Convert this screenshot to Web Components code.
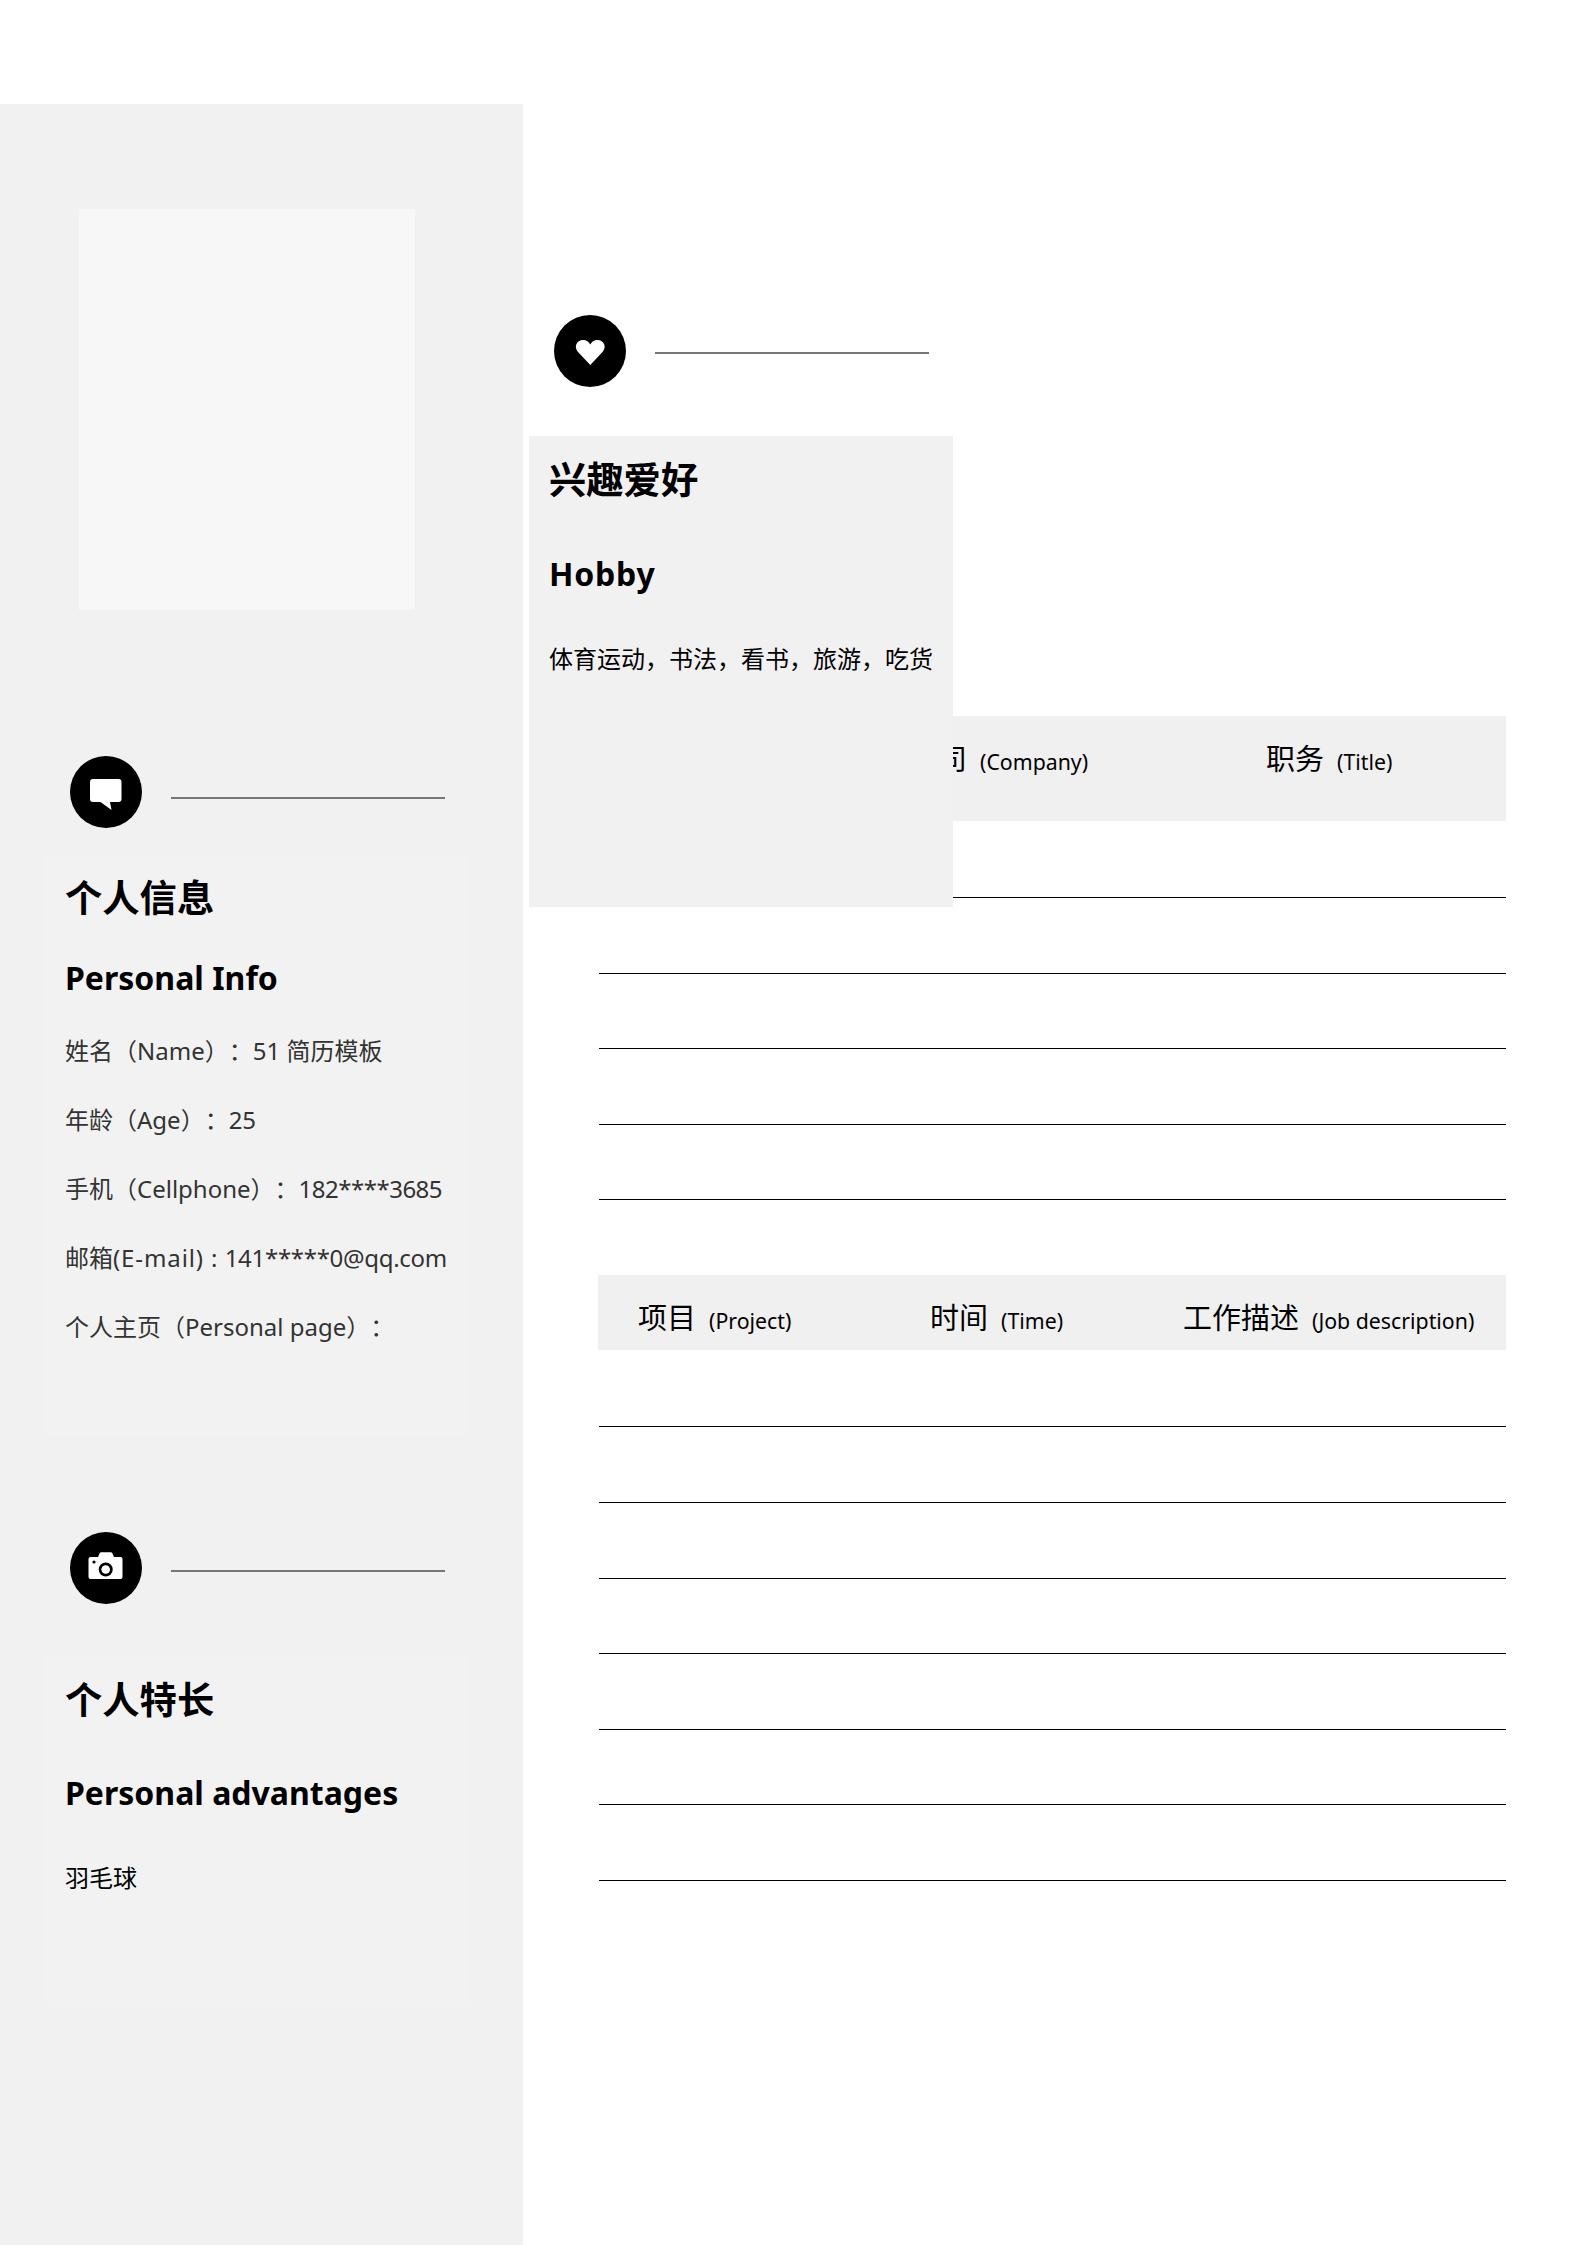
<!DOCTYPE html>
<html lang="zh-CN">
<head>
<meta charset="utf-8">
<title>简历</title>
<style>
  html, body { margin: 0; padding: 0; background: #fff; }
  body { font-family: "Noto Sans", "Noto Sans CJK SC", sans-serif; color: #000; }
  .num { letter-spacing: -0.5px; }
  .mail { letter-spacing: -0.3px; }
  .wide { letter-spacing: 0.9px; }
  .hobby { letter-spacing: 0.8px; }
</style>
</head>
<body>
<template id="badge-line-tpl">
  <style>
    :host { display: flex; align-items: flex-start; gap: 29px; }
    ::slotted(svg) { display: block; width: 72px; height: 72px; flex: none; }
    .rule { width: 274px; height: 2px; margin-top: var(--rule-top, 41px); background: #777; }
  </style>
  <slot></slot>
  <div class="rule"></div>
</template>

<template id="text-panel-tpl">
  <style>
    :host { display: block; box-sizing: border-box; background: var(--panel-bg, #f2f2f2); padding-left: var(--panel-pad, 22px); }
    .head { font-size: 37.3px; font-weight: 700; line-height: 50px; padding-top: var(--head-top, 18px); }
    .sub { font-size: 32px; font-weight: 700; line-height: 44px; margin-top: var(--sub-gap, 33px); }
    .body { font-size: 24px; margin-top: var(--body-gap, 16px); }
  </style>
  <div class="head"><slot name="head"></slot></div>
  <div class="sub"><slot name="sub"></slot></div>
  <div class="body"><slot></slot></div>
</template>

<template id="info-line-tpl">
  <style>
    :host { display: block; line-height: 69px; color: var(--line-color, #333); white-space: nowrap; text-spacing-trim: space-all; }
  </style>
  <slot></slot>
</template>

<template id="rule-table-tpl">
  <style>
    :host { display: block; width: 908px; margin-left: 75px; }
    .bar { display: grid; grid-template-columns: var(--cols); box-sizing: border-box; height: var(--bar-h, 76px); padding-top: var(--bar-top, 24px); background: #f0f0f0; }
    .row { height: 75.6px; box-sizing: border-box; border-bottom: 1px solid #000; margin-left: 1px; }
    .row.first { height: var(--first-h, 76px); }
  </style>
  <div class="bar"><slot></slot></div>
  <div class="rows"></div>
</template>

<template id="table-head-tpl">
  <style>
    :host { display: block; white-space: nowrap; font-size: 29px; line-height: 40px; }
    .en { font-size: 21.3px; margin-left: 13px; }
  </style>
  <slot></slot><span class="en"><slot name="en"></slot></span>
</template>

<template id="resume-page-tpl">
  <style>
    :host { display: grid; grid-template-columns: 523px 1fr; height: 2245px; position: relative; overflow: hidden; }
    .side { margin-top: 104px; background: #f1f1f1; display: flex; flex-direction: column; }
    .main { padding-top: 315px; display: flex; flex-direction: column; }
  </style>
  <div class="side"><slot name="side"></slot></div>
  <div class="main"><slot></slot></div>
</template>

<resume-page>
  <photo-box slot="side"></photo-box>

  <badge-line slot="side" style="margin:146px 0 0 70px">
    <svg viewBox="0 0 72 72"><circle cx="36" cy="36" r="36" fill="#000"/><path fill="#fff" d="M23.500 23h25a3 3 0 0 1 3 3v17a3 3 0 0 1-3 3h-8.500l1.500 8-11-8h-7.500a3 3 0 0 1-3-3V26a3 3 0 0 1 3-3z"/></svg>
  </badge-line>
  <text-panel slot="side" style="margin:27px 53px 0 43px;height:581px">
    <span slot="head">个人信息</span>
    <span slot="sub">Personal Info</span>
    <info-line>姓名（Name）：51 简历模板</info-line>
    <info-line>年龄（Age）：25</info-line>
    <info-line>手机（Cellphone）：<span class="num">182****3685</span></info-line>
    <info-line>邮箱<span class="wide">(E-mail) :</span> <span class="mail">141*****0@qq.com</span></info-line>
    <info-line>个人主页（Personal page）：</info-line>
  </text-panel>

  <badge-line slot="side" style="margin:96px 0 0 70px;--rule-top:38px">
    <svg viewBox="0 0 72 72"><circle cx="36" cy="36" r="36" fill="#000"/><path fill="#fff" d="M20.500 25H28l1.500-3.500a2 2 0 0 1 1.800-1.200h9.400a2 2 0 0 1 1.800 1.200L44 25h6.500a2 2 0 0 1 2 2v18a2 2 0 0 1-2 2h-30a2 2 0 0 1-2-2V27a2 2 0 0 1 2-2z"/><circle cx="35.700" cy="37.500" r="7" fill="#000"/><circle cx="35.700" cy="37.500" r="4.300" fill="#fff"/><circle cx="24" cy="30" r="1.600" fill="#000"/></svg>
  </badge-line>
  <text-panel slot="side" style="margin:50px 53px 0 43px;height:352px;--head-top:21px;--sub-gap:46px;--body-gap:28px;--line-color:#000">
    <span slot="head">个人特长</span>
    <span slot="sub">Personal advantages</span>
    <info-line>羽毛球</info-line>
  </text-panel>

  <badge-line style="margin-left:31px;--rule-top:37px">
    <svg viewBox="0 0 72 72"><circle cx="36" cy="36" r="36" fill="#000"/><path fill="#fff" d="M36.300 50 24 37c-4.500-5-1.500-12 5-12 3.500 0 6 2 7.300 4.500C37.600 27 40 25 43.500 25c6.500 0 9.500 7 5 12z"/></svg>
  </badge-line>

  <rule-table rows="5" style="margin-top:329px;--cols:311px 357px 1fr;--bar-h:105px;--bar-top:23px;--first-h:77px">
    <table-head style="margin-left:40px">时间<span slot="en">(Time)</span></table-head>
    <table-head>公司<span slot="en">(Company)</span></table-head>
    <table-head>职务<span slot="en">(Title)</span></table-head>
  </rule-table>

  <rule-table rows="7" style="margin-top:75px;--cols:332px 253px 1fr;--bar-h:75px;--bar-top:23px;--first-h:77px">
    <table-head style="margin-left:40px">项目<span slot="en">(Project)</span></table-head>
    <table-head>时间<span slot="en">(Time)</span></table-head>
    <table-head>工作描述<span slot="en">(Job description)</span></table-head>
  </rule-table>

  <hobby-card>
    <text-panel style="--panel-bg:#f1f1f1;--panel-pad:20px;--head-top:19px;--sub-gap:47px;--body-gap:28px;--line-color:#000;height:471px">
      <span slot="head">兴趣爱好</span>
      <span slot="sub" class="hobby">Hobby</span>
      <info-line>体育运动，书法，看书，旅游，吃货</info-line>
    </text-panel>
  </hobby-card>
</resume-page>

<script>
  function stamp(name, tplId, setup) {
    customElements.define(name, class extends HTMLElement {
      connectedCallback() {
        if (this.shadowRoot) return;
        this.attachShadow({ mode: 'open' });
        this.shadowRoot.appendChild(document.getElementById(tplId).content.cloneNode(true));
        if (setup) setup(this);
      }
    });
  }

  stamp('resume-page', 'resume-page-tpl');
  stamp('badge-line', 'badge-line-tpl');
  stamp('text-panel', 'text-panel-tpl');
  stamp('info-line', 'info-line-tpl');
  stamp('table-head', 'table-head-tpl');
  stamp('rule-table', 'rule-table-tpl', (el) => {
    const rows = el.shadowRoot.querySelector('.rows');
    const n = Number(el.getAttribute('rows'));
    for (let i = 0; i < n; i++) {
      const r = document.createElement('div');
      r.className = i === 0 ? 'row first' : 'row';
      rows.appendChild(r);
    }
  });

  // the empty photo placeholder
  customElements.define('photo-box', class extends HTMLElement {
    connectedCallback() {
      this.attachShadow({ mode: 'open' });
      this.shadowRoot.innerHTML = `<style>
        :host { display: block; width: 336px; height: 401px; margin: 105px 0 0 79px; background: #f7f7f7; }
      </style>`;
    }
  });

  // sits over the first table, like in the reference
  customElements.define('hobby-card', class extends HTMLElement {
    connectedCallback() {
      this.attachShadow({ mode: 'open' });
      this.shadowRoot.innerHTML = `<style>
        :host { display: block; position: absolute; left: 529px; top: 436px; width: 424px; z-index: 2; }
      </style><slot></slot>`;
    }
  });
</script>
</body>
</html>
